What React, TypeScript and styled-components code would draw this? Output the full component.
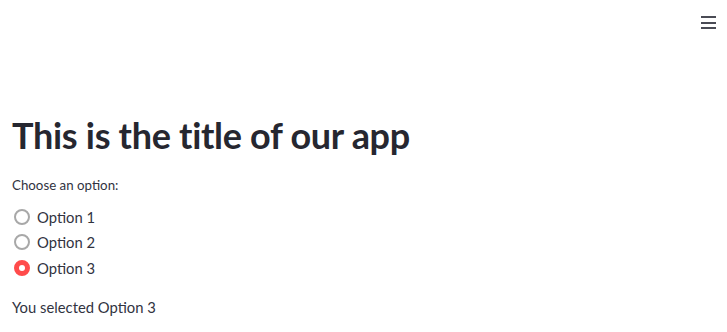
import { useState } from 'react'
import styled, { createGlobalStyle } from 'styled-components'

const options = ['Option 1', 'Option 2', 'Option 3']

function App() {
	const [selected, setSelected] = useState(2)

	return (
		<>
			<GlobalStyle />
			<Header>
				<MenuButton aria-label="menu">
					<span />
					<span />
					<span />
				</MenuButton>
			</Header>
			<Main>
				<Title>This is the title of our app</Title>
				<Label>Choose an option:</Label>
				<RadioGroup>
					{options.map((option, idx) => (
						<RadioRow key={option} onClick={() => setSelected(idx)}>
							<RadioDot checked={idx === selected} />
							<OptionText>{option}</OptionText>
						</RadioRow>
					))}
				</RadioGroup>
				<Result>You selected {options[selected]}</Result>
			</Main>
		</>
	)
}

const GlobalStyle = createGlobalStyle`
	body {
		margin: 0;
		background: #ffffff;
		color: #31333f;
		font-family: Lato, "Open Sans", sans-serif;
	}
`

const Header = styled.header`
	display: flex;
	justify-content: flex-end;
	height: 46px;
	padding: 0 11px;
	box-sizing: border-box;
`

const MenuButton = styled.button`
	display: flex;
	flex-direction: column;
	gap: 3.5px;
	margin-top: 16px;
	padding: 0;
	border: none;
	background: none;
	height: fit-content;

	span {
		display: block;
		width: 15px;
		height: 2px;
		background: #4a4b55;
	}
`

const Main = styled.main`
	display: flex;
	flex-direction: column;
	padding: 64px 12px 0;
`

const Title = styled.h1`
	margin: 0;
	font-size: 36px;
	line-height: 50px;
	font-weight: 700;
	color: #262730;
	letter-spacing: -0.3px;
`

const Label = styled.div`
	margin-top: 15px;
	font-size: 13.3px;
	line-height: 20px;
	color: #31333f;
`

const RadioGroup = styled.div`
	display: flex;
	flex-direction: column;
	margin-top: 9px;
`

const RadioRow = styled.label`
	display: flex;
	align-items: center;
	gap: 7px;
	height: 25.5px;
	cursor: pointer;
`

const RadioDot = styled.span<{ checked: boolean }>`
	width: 16px;
	height: 16px;
	margin-left: 2px;
	box-sizing: border-box;
	border-radius: 50%;
	background: ${(p) => (p.checked ? '#ff4b4b' : '#ffffff')};
	border: ${(p) => (p.checked ? '5px solid #ff4b4b' : '2px solid #a8a8a8')};
	position: relative;

	&::after {
		content: '';
		display: ${(p) => (p.checked ? 'block' : 'none')};
		position: absolute;
		inset: 0;
		border-radius: 50%;
		background: #ffffff;
	}
`

const OptionText = styled.span`
	font-size: 14.8px;
	line-height: 24px;
`

const Result = styled.p`
	margin: 14px 0 0;
	font-size: 14.8px;
	line-height: 24px;
`

export default App
